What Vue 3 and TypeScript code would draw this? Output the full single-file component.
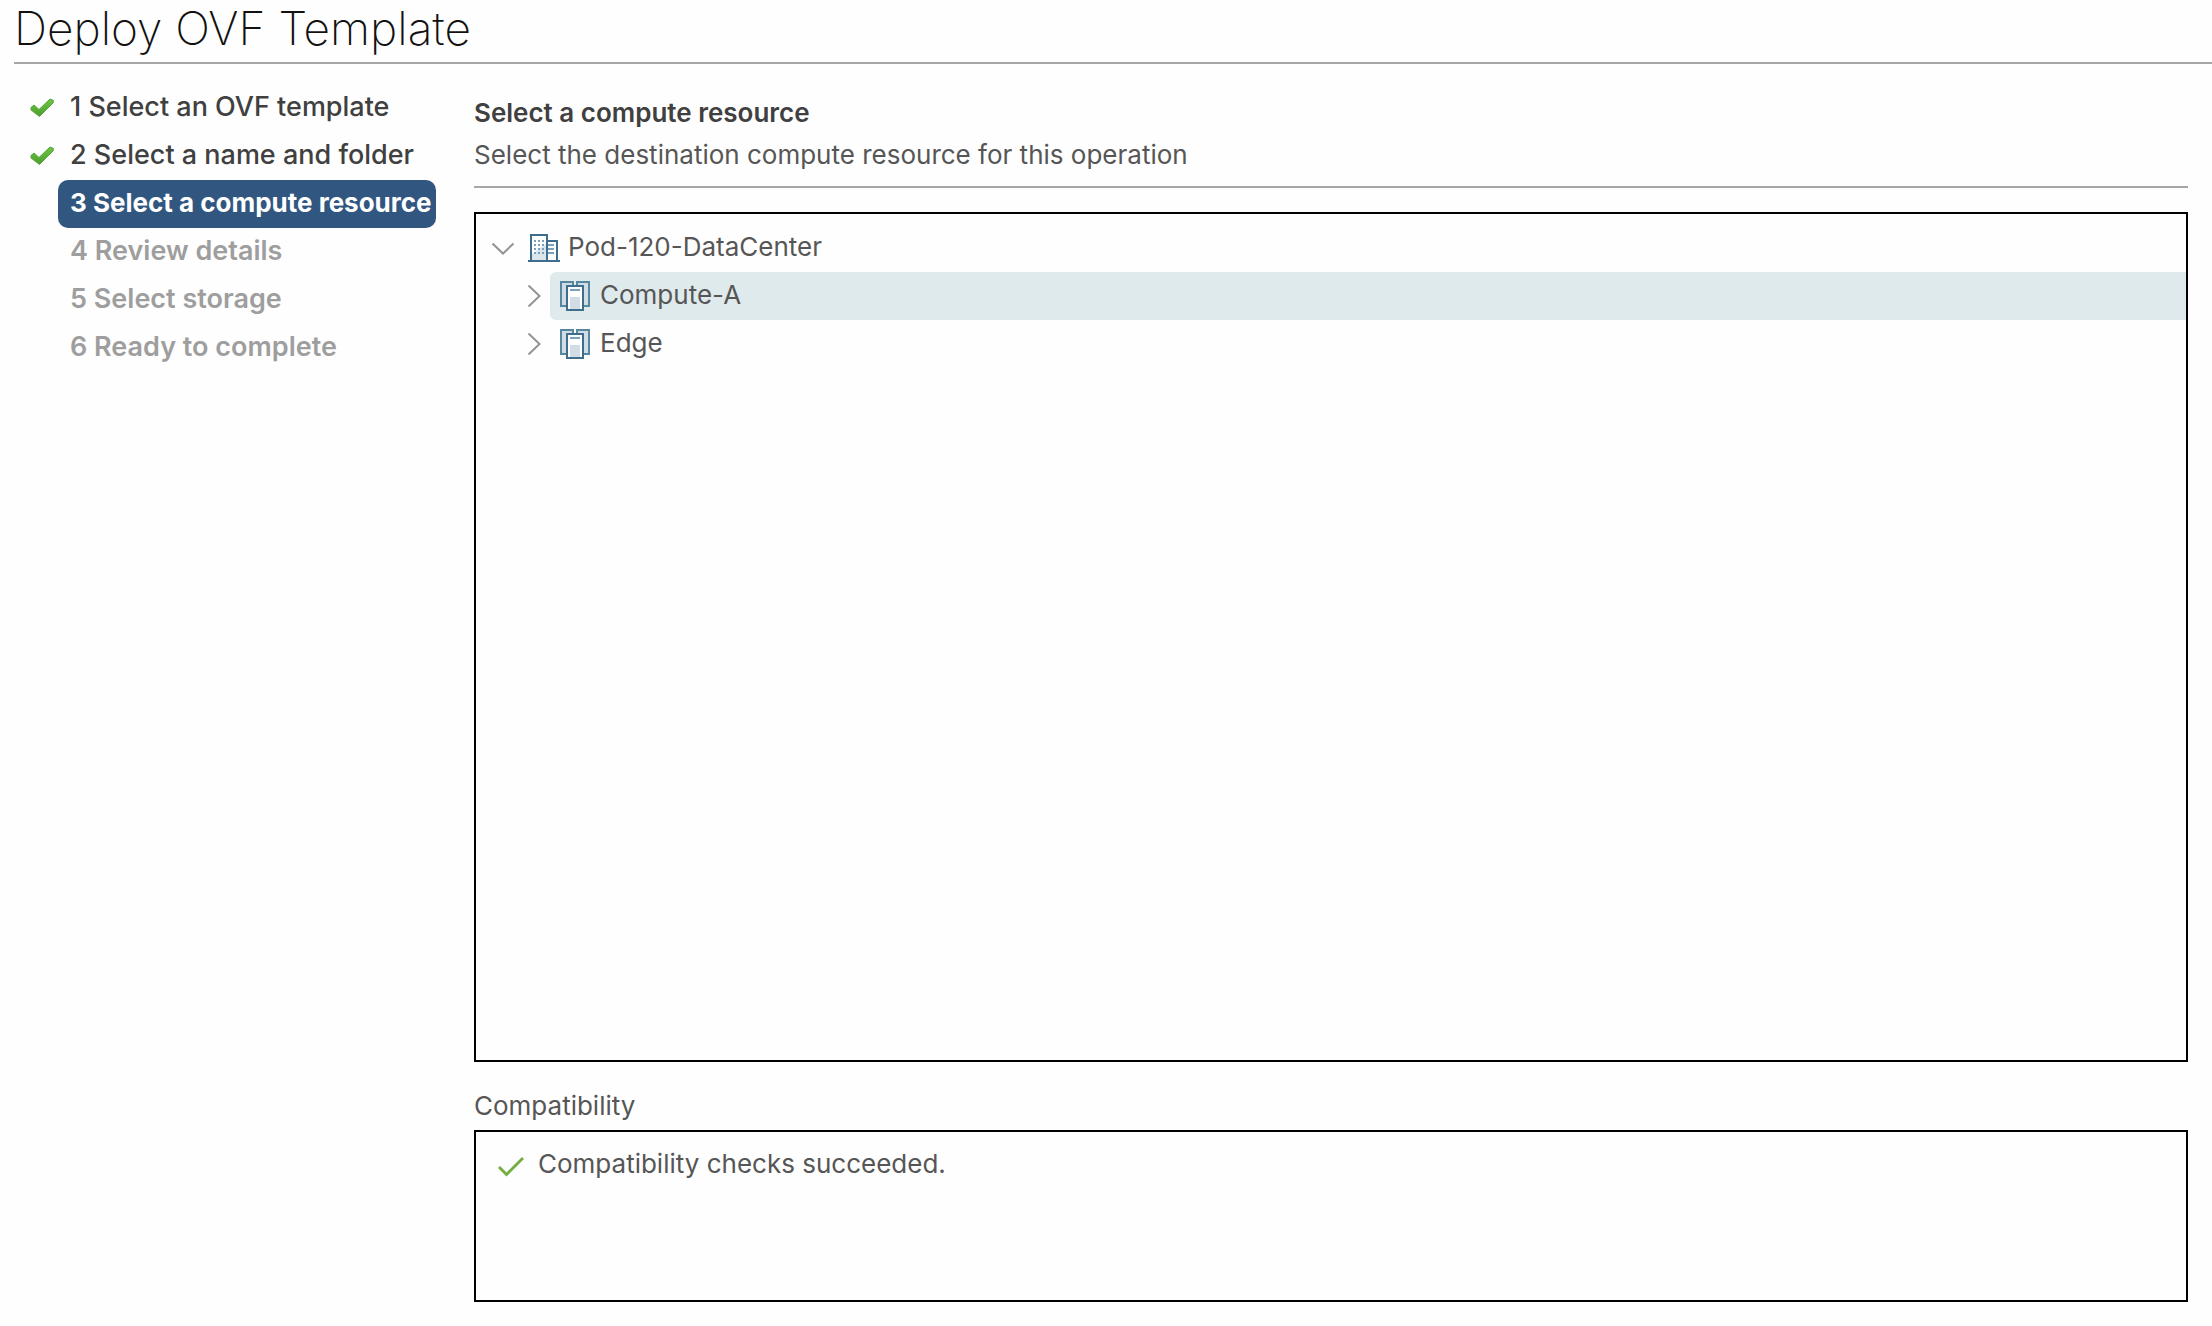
<script setup lang="ts">
import { ref } from 'vue'

type StepState = 'done' | 'current' | 'todo'

interface Step {
  label: string
  state: StepState
}

const steps: Step[] = [
  { label: '1 Select an OVF template', state: 'done' },
  { label: '2 Select a name and folder', state: 'done' },
  { label: '3 Select a compute resource', state: 'current' },
  { label: '4 Review details', state: 'todo' },
  { label: '5 Select storage', state: 'todo' },
  { label: '6 Ready to complete', state: 'todo' },
]

const clusters: string[] = ['Compute-A', 'Edge']
const selected = ref<string>('Compute-A')
</script>

<template>
  <div class="wizard">
    <header class="title-bar">
      <h1>Deploy OVF Template</h1>
    </header>
    <div class="body">
      <nav class="steps" aria-label="Wizard steps">
        <ol>
          <li v-for="step in steps" :key="step.label" :class="['step', step.state]">
            <span class="mark">
              <svg v-if="step.state === 'done'" width="24" height="20" viewBox="0 0 24 20" aria-hidden="true">
                <defs>
                  <linearGradient id="tick" x1="0" y1="0" x2="0" y2="1">
                    <stop offset="0" stop-color="#6cc644" />
                    <stop offset="1" stop-color="#4a9c2d" />
                  </linearGradient>
                </defs>
                <path d="M1 9.5 L4 7 L9 11.5 L20 1 L23.5 2.5 L23 5 L9.500 18.500 L1 12 Z" fill="url(#tick)" stroke="#55a538" stroke-width="1" stroke-linejoin="round" />
              </svg>
            </span>
            <button type="button" :disabled="step.state === 'todo'" :aria-current="step.state === 'current' ? 'step' : undefined">
              {{ step.label }}
            </button>
          </li>
        </ol>
      </nav>
      <main class="page">
        <div class="page-head">
          <h2>Select a compute resource</h2>
          <p>Select the destination compute resource for this operation</p>
        </div>
        <div class="tree" role="tree" aria-label="Compute resources">
          <div class="row" role="treeitem" aria-expanded="true">
            <button class="toggle" type="button" aria-label="Collapse Pod-120-DataCenter">
              <svg width="24" height="24" viewBox="0 0 24 24" aria-hidden="true">
                <path d="M0.500 7.500 L11 17.500 L21.500 7.500" fill="none" stroke="#949494" stroke-width="2" />
              </svg>
            </button>
            <button class="node" type="button">
              <svg width="32" height="28" viewBox="0 0 32 28" aria-hidden="true">
                <path d="M4 20 L18 10 V26 H4 Z" fill="#dbe5ec" />
                <path d="M3 27 V1 H19 V27 M19 7 H29 V27 M0 27 H32" fill="none" stroke="#3f6e8c" stroke-width="2" />
                <path d="M6 7 H16 M6 11 H16 M6 15 H16 M6 19 H16" stroke="#7ba0bd" stroke-width="2" stroke-dasharray="2 2" />
                <path d="M20 11 H26 M20 15 H26 M20 19 H26" stroke="#7ba0bd" stroke-width="2" />
              </svg>
              <span>Pod-120-DataCenter</span>
            </button>
          </div>
          <div role="group">
            <div v-for="name in clusters" :key="name" class="row child" role="treeitem" aria-expanded="false" :aria-selected="selected === name">
              <button class="toggle" type="button" :aria-label="'Expand ' + name">
                <svg width="24" height="24" viewBox="0 0 24 24" aria-hidden="true">
                  <path d="M2.500 1.500 L13.500 12 L2.500 22.500" fill="none" stroke="#949494" stroke-width="2" />
                </svg>
              </button>
              <button class="node" :class="{ selected: selected === name }" type="button" @click="selected = name">
                <svg width="30" height="30" viewBox="0 0 30 30" aria-hidden="true">
                  <path d="M1 1 H13 V5 H7 V25 H1 Z M29 1 H17 V5 H23 V25 H29 Z" fill="#d0dde6" stroke="#57889f" stroke-width="2" />
                  <path d="M7 5 H23 V29 H7 Z" fill="#fff" stroke="#3f6e8c" stroke-width="2" />
                  <path d="M10 9 H20" stroke="#7ba0bd" stroke-width="2" />
                  <path d="M10 16 H20 V28 H10 Z" fill="#d0dde6" />
                </svg>
                <span>{{ name }}</span>
              </button>
            </div>
          </div>
        </div>
        <section class="compat" aria-labelledby="compat-title">
          <h3 id="compat-title">Compatibility</h3>
          <div class="result">
            <svg width="26" height="22" viewBox="0 0 26 22" aria-hidden="true">
              <path d="M1 11 L8.500 18.500 L25 2" fill="none" stroke="#74ae43" stroke-width="3" />
            </svg>
            <p>Compatibility checks succeeded.</p>
          </div>
        </section>
      </main>
    </div>
  </div>
</template>

<style>
body {
  background: #fefefe;
}
</style>

<style scoped>
.wizard {
  display: flex;
  flex-direction: column;
  box-sizing: border-box;
  min-height: 100vh;
  padding-bottom: 24px;
  font-family: Inter, "Noto Sans", sans-serif;
  font-size: 26px;
  line-height: 48px;
  color: #565656;
}
h1,
h2,
h3,
p,
ol {
  margin: 0;
  padding: 0;
  font-size: inherit;
  font-weight: 400;
}
svg {
  flex: none;
}
button {
  padding: 0;
  border: 0;
  background: none;
  color: inherit;
  font: inherit;
  text-align: left;
  white-space: nowrap;
}
.title-bar {
  margin-left: 14px;
  padding-bottom: 6px;
  border-bottom: 2px solid #a6a6a6;
}
h1 {
  font-size: 46px;
  line-height: 56px;
  font-weight: 200;
  color: #111;
}
.body {
  display: flex;
  flex: 1;
}
.steps {
  flex: none;
  width: 474px;
  padding-top: 20px;
}
ol {
  list-style: none;
}
.step {
  display: flex;
  font-size: 27px;
  font-weight: 500;
  color: #404040;
}
.mark {
  display: flex;
  align-items: center;
  width: 28px;
  padding-left: 30px;
}
.step button {
  height: 48px;
  min-width: 378px;
  padding: 0 0 2px 12px;
  line-height: 46px;
  border-radius: 10px;
}
.step.current button {
  background: #31567f;
  color: #fff;
  font-size: 26px;
  font-weight: 700;
}
.step.todo button {
  color: #9e9e9e;
  font-weight: 600;
}
.page {
  display: flex;
  flex: 1;
  flex-direction: column;
  min-width: 0;
  margin-right: 24px;
}
.page-head {
  margin-bottom: 24px;
  padding: 28px 0 10px;
  border-bottom: 2px solid #a6a6a6;
}
.page-head h2,
.page-head p {
  line-height: 42px;
}
.page-head h2 {
  font-weight: 600;
  color: #404040;
}
.tree {
  flex: 1;
  padding: 10px 0 10px 16px;
  border: 2px solid #000;
}
.row {
  display: flex;
}
.row.child {
  padding-left: 34px;
}
.toggle {
  display: flex;
  align-items: center;
  width: 24px;
}
.node {
  display: flex;
  flex: 1;
  align-items: center;
  gap: 8px;
  height: 48px;
  padding-left: 12px;
  border-radius: 6px 0 0 6px;
}
.child .node {
  gap: 10px;
  padding-left: 10px;
}
.node span {
  padding-bottom: 2px;
  line-height: 46px;
}
.node.selected {
  background: #dfeaec;
}
.compat h3 {
  padding-top: 20px;
}
.result {
  display: flex;
  align-items: flex-start;
  gap: 14px;
  box-sizing: border-box;
  min-height: 172px;
  padding: 8px 22px;
  border: 2px solid #000;
}
.result svg {
  margin-top: 16px;
}
</style>
